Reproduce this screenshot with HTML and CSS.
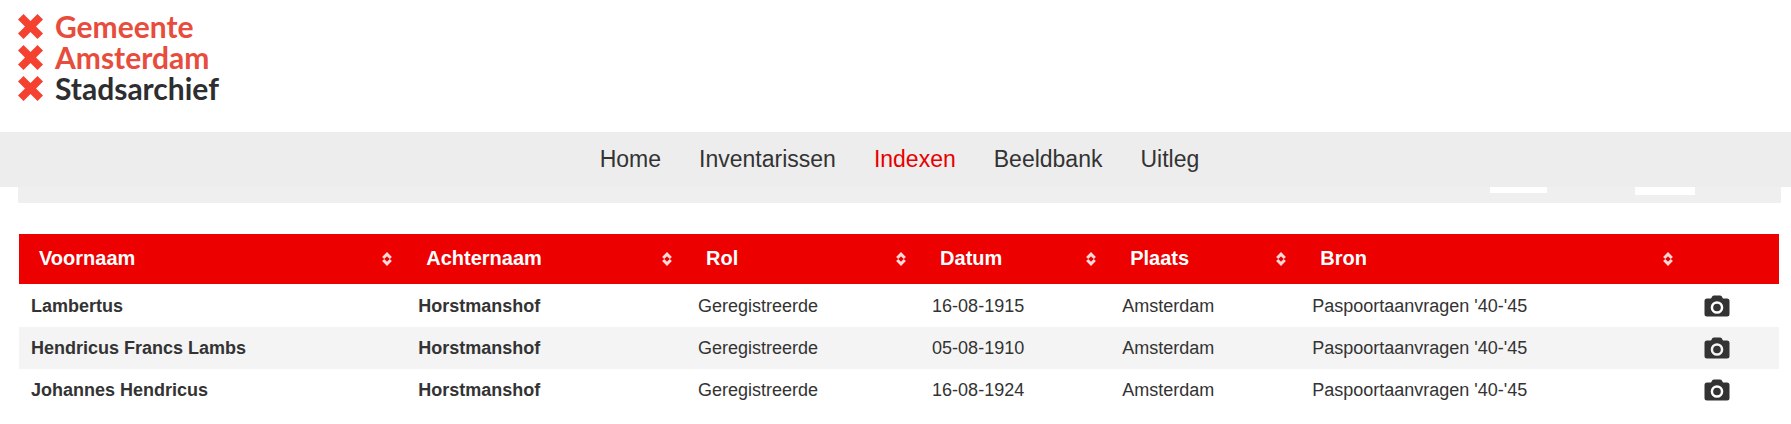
FILE: index.html
```
<!DOCTYPE html>
<html lang="nl">
<head>
<meta charset="utf-8">
<title>Indexen - Stadsarchief Amsterdam</title>
<link rel="stylesheet" href="styles.css">
</head>
<body>
<svg class="sprite" aria-hidden="true">
  <symbol id="cross" viewBox="0 0 25 25"><path d="M5.500 0 12.500 7 19.500 0 25 5.500 18 12.500 25 19.500 19.500 25 12.500 18 5.500 25 0 19.500 7 12.500 0 5.500z"/></symbol>
  <symbol id="sort" viewBox="0 0 10 14"><path d="M1.200 6 5 2.200 8.800 6M1.200 8 5 11.800 8.800 8" fill="none" stroke="currentColor" stroke-width="3"/></symbol>
  <symbol id="camera" viewBox="0 0 26 22"><path fill="currentColor" fill-rule="evenodd" d="M3 3.500h4L8.500 1Q9 .5 10 .5h6q1 0 1.500.5L19 3.500h4q2.500 0 2.500 2.500v13q0 2.500-2.500 2.500H3Q.5 21.500.5 19V6Q.5 3.500 3 3.500zM13 6.200a6.300 6.300 0 1 0 0 12.600 6.300 6.300 0 0 0 0-12.600z"/><circle cx="13" cy="12.500" r="3.800" fill="currentColor"/></symbol>
</svg>
<header class="header">
  <a class="logo" href="#">
    <span class="logo-line"><svg class="cross"><use href="#cross"/></svg>Gemeente</span>
    <span class="logo-line"><svg class="cross"><use href="#cross"/></svg>Amsterdam</span>
    <span class="logo-line"><svg class="cross"><use href="#cross"/></svg><span class="logo-dark">Stadsarchief</span></span>
  </a>
</header>
<nav class="nav">
  <a class="nav-link" href="#">Home</a>
  <a class="nav-link" href="#">Inventarissen</a>
  <a class="nav-link active" href="#" aria-current="page">Indexen</a>
  <a class="nav-link" href="#">Beeldbank</a>
  <a class="nav-link" href="#">Uitleg</a>
</nav>
<main class="main">
  <div class="toolbar"><span class="field-small"></span><span class="field-large"></span></div>
  <table class="results">
    <colgroup><col class="c-first"><col class="c-last"><col class="c-role"><col class="c-date"><col class="c-place"><col class="c-source"><col></colgroup>
    <thead>
      <tr>
        <th><button class="sort">Voornaam<svg class="sort-icon"><use href="#sort"/></svg></button></th>
        <th><button class="sort">Achternaam<svg class="sort-icon"><use href="#sort"/></svg></button></th>
        <th><button class="sort">Rol<svg class="sort-icon"><use href="#sort"/></svg></button></th>
        <th><button class="sort">Datum<svg class="sort-icon"><use href="#sort"/></svg></button></th>
        <th><button class="sort">Plaats<svg class="sort-icon"><use href="#sort"/></svg></button></th>
        <th><button class="sort">Bron<svg class="sort-icon"><use href="#sort"/></svg></button></th>
        <th></th>
      </tr>
    </thead>
    <tbody>
      <tr><td class="name">Lambertus</td><td class="name">Horstmanshof</td><td>Geregistreerde</td><td>16-08-1915</td><td>Amsterdam</td><td>Paspoortaanvragen '40-'45</td><td class="scan"><a class="scan-link" href="#" aria-label="Scan"><svg class="camera"><use href="#camera"/></svg></a></td></tr>
      <tr><td class="name">Hendricus Francs Lambs</td><td class="name">Horstmanshof</td><td>Geregistreerde</td><td>05-08-1910</td><td>Amsterdam</td><td>Paspoortaanvragen '40-'45</td><td class="scan"><a class="scan-link" href="#" aria-label="Scan"><svg class="camera"><use href="#camera"/></svg></a></td></tr>
      <tr><td class="name">Johannes Hendricus</td><td class="name">Horstmanshof</td><td>Geregistreerde</td><td>16-08-1924</td><td>Amsterdam</td><td>Paspoortaanvragen '40-'45</td><td class="scan"><a class="scan-link" href="#" aria-label="Scan"><svg class="camera"><use href="#camera"/></svg></a></td></tr>
    </tbody>
  </table>
</main>
</body>
</html>
```
FILE: styles.css
```
* { box-sizing: border-box; }
body {
  margin: 0;
  background: #fff;
  color: #333;
  font-family: "Liberation Sans", Arial, sans-serif;
  font-size: 18px;
}
a { color: inherit; text-decoration: none; }
.sprite { display: none; }
.header { display: flex; padding: 11px 18px 28px; }
.logo {
  display: flex;
  flex-direction: column;
  color: #e74c3c;
  font-family: Lato, "Open Sans", sans-serif;
  font-size: 30px;
  font-weight: 700;
  line-height: 31px;
}
.logo-line { display: flex; align-items: center; gap: 12px; }
.logo-dark { color: #2e2e30; }
.cross { width: 25px; height: 25px; fill: #f54130; }
.nav {
  display: flex;
  justify-content: center;
  gap: 38px;
  padding: 13px 0 14px 8px;
  background: #ededed;
  color: #333;
  font-size: 23px;
  line-height: 28px;
}
.nav-link.active { color: #e60000; }
.main { padding: 0 10px 0 18px; }
.toolbar {
  display: flex;
  justify-content: flex-end;
  align-items: flex-start;
  gap: 88px;
  padding: 0 86px 8px;
  margin-bottom: 31px;
  background: #efefef;
}
.field-small { width: 57px; height: 6px; background: #fff; }
.field-large { width: 60px; height: 8px; background: #fff; }
.results {
  width: 100%;
  padding: 0 2px 0 1px;
  border-spacing: 0;
  table-layout: fixed;
}
.c-first, .c-source { width: 22%; }
.c-last { width: 15.900%; }
.c-role { width: 13.300%; }
.c-date, .c-place { width: 10.800%; }
th { height: 51px; padding: 0 14px 0 20px; background: #ec0000; border-bottom: 1px solid #fff; }
.sort {
  display: flex;
  justify-content: space-between;
  align-items: center;
  width: 100%;
  padding: 0 0 1px;
  border: 0;
  background: none;
  color: #fff;
  font: inherit;
  font-size: 20px;
  font-weight: 700;
}
.sort-icon { width: 10px; height: 14px; color: #ffd8d8; }
td { height: 42px; padding: 0 12px; white-space: nowrap; }
tbody tr:nth-child(even) { background: #f4f4f4; }
.name { font-weight: 700; }
.scan { padding: 0 17px; }
.scan-link { display: flex; }
.camera { width: 26px; height: 22px; color: #333; }
```
